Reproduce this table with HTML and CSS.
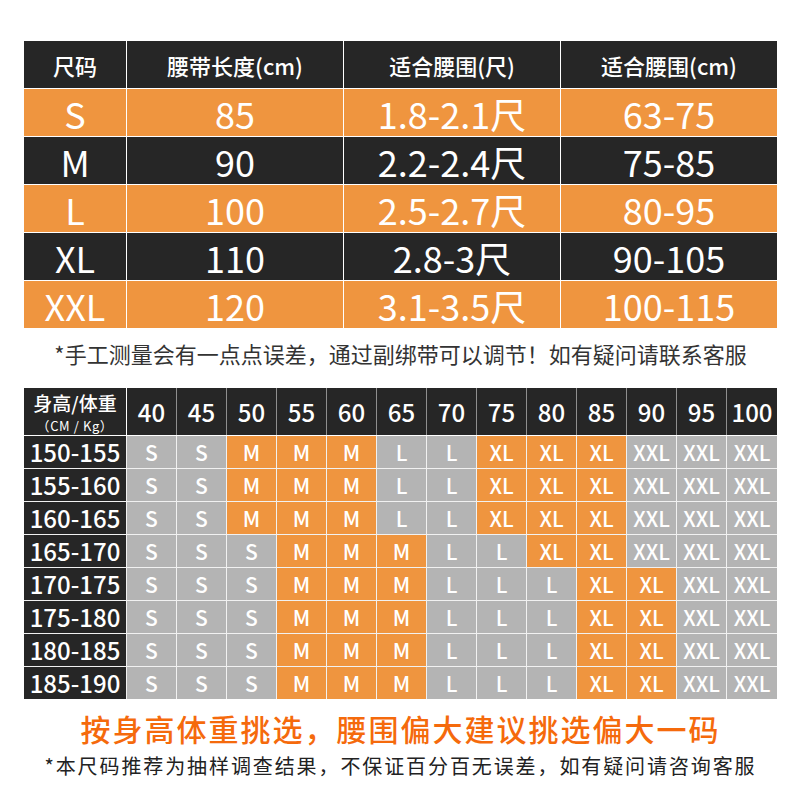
FILE: index.html
```html
<!DOCTYPE html>
<html lang="zh-CN">
<head>
<meta charset="utf-8">
<title>尺码表</title>
<link rel="stylesheet" href="styles.css">
</head>
<body>
<div class="page">
  <div class="size-table">
    <div class="cell head">尺码</div>
    <div class="cell head">腰带长度(cm)</div>
    <div class="cell head">适合腰围(尺)</div>
    <div class="cell head">适合腰围(cm)</div>

    <div class="cell orange">S</div><div class="cell orange">85</div><div class="cell orange">1.8-2.1尺</div><div class="cell orange">63-75</div>
    <div class="cell dark">M</div><div class="cell dark">90</div><div class="cell dark">2.2-2.4尺</div><div class="cell dark">75-85</div>
    <div class="cell orange">L</div><div class="cell orange">100</div><div class="cell orange">2.5-2.7尺</div><div class="cell orange">80-95</div>
    <div class="cell dark">XL</div><div class="cell dark">110</div><div class="cell dark">2.8-3尺</div><div class="cell dark">90-105</div>
    <div class="cell orange">XXL</div><div class="cell orange">120</div><div class="cell orange">3.1-3.5尺</div><div class="cell orange">100-115</div>
  </div>

  <p class="note">*手工测量会有一点点误差，通过副绑带可以调节！如有疑问请联系客服</p>

  <div class="chart-head">
    <div class="hc first"><span class="hc-main">身高/体重</span><span class="hc-sub">（CM / Kg）</span></div>
    <div class="hc">40</div><div class="hc">45</div><div class="hc">50</div><div class="hc">55</div><div class="hc">60</div><div class="hc">65</div><div class="hc">70</div><div class="hc">75</div><div class="hc">80</div><div class="hc">85</div><div class="hc">90</div><div class="hc">95</div><div class="hc">100</div>
  </div>
  <div class="chart-body">
    <div class="rl">150-155</div><div class="c g">S</div><div class="c g">S</div><div class="c o">M</div><div class="c o">M</div><div class="c o">M</div><div class="c g">L</div><div class="c g">L</div><div class="c o">XL</div><div class="c o">XL</div><div class="c o">XL</div><div class="c g">XXL</div><div class="c g">XXL</div><div class="c g">XXL</div>
    <div class="rl">155-160</div><div class="c g">S</div><div class="c g">S</div><div class="c o">M</div><div class="c o">M</div><div class="c o">M</div><div class="c g">L</div><div class="c g">L</div><div class="c o">XL</div><div class="c o">XL</div><div class="c o">XL</div><div class="c g">XXL</div><div class="c g">XXL</div><div class="c g">XXL</div>
    <div class="rl">160-165</div><div class="c g">S</div><div class="c g">S</div><div class="c o">M</div><div class="c o">M</div><div class="c o">M</div><div class="c g">L</div><div class="c g">L</div><div class="c o">XL</div><div class="c o">XL</div><div class="c o">XL</div><div class="c g">XXL</div><div class="c g">XXL</div><div class="c g">XXL</div>
    <div class="rl">165-170</div><div class="c g">S</div><div class="c g">S</div><div class="c g">S</div><div class="c o">M</div><div class="c o">M</div><div class="c o">M</div><div class="c g">L</div><div class="c g">L</div><div class="c o">XL</div><div class="c o">XL</div><div class="c g">XXL</div><div class="c g">XXL</div><div class="c g">XXL</div>
    <div class="rl">170-175</div><div class="c g">S</div><div class="c g">S</div><div class="c g">S</div><div class="c o">M</div><div class="c o">M</div><div class="c o">M</div><div class="c g">L</div><div class="c g">L</div><div class="c g">L</div><div class="c o">XL</div><div class="c o">XL</div><div class="c g">XXL</div><div class="c g">XXL</div>
    <div class="rl">175-180</div><div class="c g">S</div><div class="c g">S</div><div class="c g">S</div><div class="c o">M</div><div class="c o">M</div><div class="c o">M</div><div class="c g">L</div><div class="c g">L</div><div class="c g">L</div><div class="c o">XL</div><div class="c o">XL</div><div class="c g">XXL</div><div class="c g">XXL</div>
    <div class="rl">180-185</div><div class="c g">S</div><div class="c g">S</div><div class="c g">S</div><div class="c o">M</div><div class="c o">M</div><div class="c o">M</div><div class="c g">L</div><div class="c g">L</div><div class="c g">L</div><div class="c o">XL</div><div class="c o">XL</div><div class="c g">XXL</div><div class="c g">XXL</div>
    <div class="rl">185-190</div><div class="c g">S</div><div class="c g">S</div><div class="c g">S</div><div class="c o">M</div><div class="c o">M</div><div class="c o">M</div><div class="c g">L</div><div class="c g">L</div><div class="c g">L</div><div class="c o">XL</div><div class="c o">XL</div><div class="c g">XXL</div><div class="c g">XXL</div>
  </div>

  <p class="title">按身高体重挑选，腰围偏大建议挑选偏大一码</p>
  <p class="note2">*本尺码推荐为抽样调查结果，不保证百分百无误差，如有疑问请咨询客服</p>
</div>
</body>
</html>
```

FILE: styles.css
```css
* { box-sizing: border-box; }
html, body {
  margin: 0;
  padding: 0;
  background: #ffffff;
}
body {
  font-family: "Noto Sans CJK SC", "Noto Sans", sans-serif;
  color: #ffffff;
}
.page {
  width: 800px;
  padding: 41px 23px 0 24px;
}

/* top size table */
.size-table {
  display: grid;
  grid-template-columns: 102px 216px 216px 216px;
  grid-template-rows: repeat(6, 47px);
  gap: 1px;
  background: #ffffff;
}
.cell {
  display: flex;
  align-items: center;
  justify-content: center;
  font-size: 36px;
  line-height: 1;
  font-weight: 400;
}
.cell.head {
  background: #262626;
  font-size: 22px;
  font-weight: 500;
}
.cell.dark { background: #262626; }
.cell.orange { background: #ef953f; }

.note {
  margin: 10px 0 20px;
  height: 30px;
  line-height: 30px;
  text-align: center;
  font-size: 22px;
  color: #333333;
}

/* second chart */
.chart-head {
  display: grid;
  grid-template-columns: 102px repeat(12, 49px) 50px;
  grid-template-rows: 47px;
  gap: 1px;
  background: #8f8f8f;
  border-bottom: 1px solid #ffffff;
}
.hc {
  background: #262626;
  display: flex;
  align-items: center;
  justify-content: center;
  font-size: 24px;
  font-weight: 500;
  line-height: 1;
}
.hc.first {
  flex-direction: column;
  box-shadow: 1px 0 0 #ffffff;
}
.hc-main {
  font-size: 19px;
  line-height: 27px;
}
.hc-sub {
  font-size: 13px;
  line-height: 19px;
  letter-spacing: 0.6px;
  font-weight: 400;
}
.chart-body {
  display: grid;
  grid-template-columns: 102px repeat(12, 49px) 50px;
  grid-auto-rows: 32px;
  gap: 1px;
  background: #f1f1f1;
}
.rl {
  background: #262626;
  display: flex;
  align-items: center;
  justify-content: center;
  font-size: 24px;
  font-weight: 500;
  line-height: 1;
}
.c {
  display: flex;
  align-items: center;
  justify-content: center;
  font-size: 21px;
  font-weight: 500;
  line-height: 1;
}
.c.g { background: #b4b4b4; }
.c.o { background: #ef953f; }

.title {
  margin: 11px 0 0;
  line-height: 36px;
  text-align: center;
  font-size: 30px;
  font-weight: 500;
  letter-spacing: 2px;
  color: #f56a0c;
}
.note2 {
  margin: 7px 0 0;
  line-height: 26px;
  text-align: center;
  font-size: 20px;
  letter-spacing: 1.9px;
  color: #222222;
}
```
